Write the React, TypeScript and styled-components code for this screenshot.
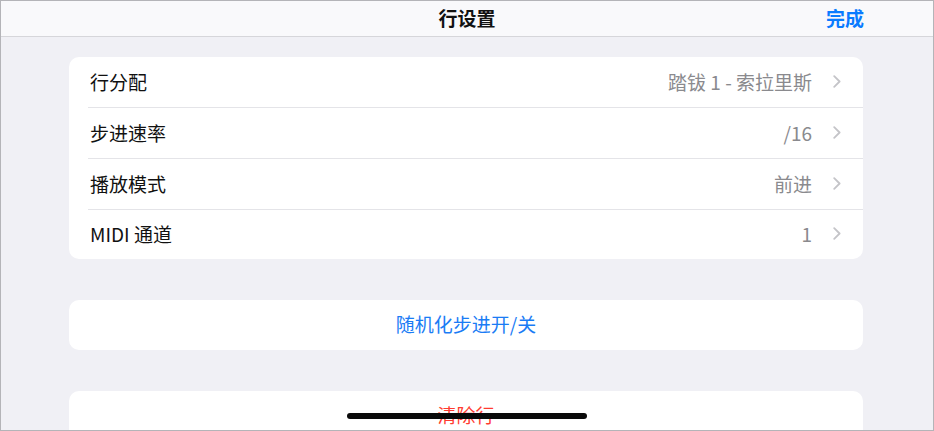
import React from "react";
import styled, { createGlobalStyle } from "styled-components";

const Global = createGlobalStyle`
  html, body { margin: 0; padding: 0; }
  body {
    font-family: "Noto Sans CJK SC", "Noto Sans", "Liberation Sans", sans-serif;
    -webkit-font-smoothing: antialiased;
  }
`;

const Frame = styled.div`
  position: relative;
  width: 934px;
  height: 431px;
  box-sizing: border-box;
  border: 1px solid #b4b4b8;
  background: #f0f0f5;
  overflow: hidden;
  display: flex;
  flex-direction: column;
`;

const NavBar = styled.header`
  flex: none;
  height: 35px;
  box-sizing: border-box;
  background: #f9f9fb;
  border-bottom: 1px solid #d6d6da;
  display: grid;
  grid-template-columns: 1fr auto 1fr;
  align-items: center;
  padding: 0 69px 3px;
  height: 36px;
`;

const Title = styled.h1`
  grid-column: 2;
  margin: 0;
  font-size: 19px;
  font-weight: 700;
  color: #111;
  line-height: 1;
`;

const Done = styled.button`
  grid-column: 3;
  justify-self: end;
  border: 0;
  background: none;
  padding: 0;
  font: inherit;
  font-size: 19px;
  font-weight: 700;
  color: #0a7bff;
  line-height: 1;
`;

const Content = styled.main`
  display: flex;
  flex-direction: column;
  gap: 41px;
  padding: 20px 70px 0 68px;
`;

const Card = styled.section`
  background: #fff;
  border-radius: 10px;
  overflow: hidden;
`;

const Row = styled.div`
  height: 50px;
  box-sizing: border-box;
  margin-left: 19px;
  padding: 0 22px 2px 2px;
  display: flex;
  align-items: center;
  border-bottom: 1px solid #e4e4e8;
  &:not(:last-child) {
    height: 51px;
  }
  &:last-child {
    border-bottom: 0;
    height: 49px;
  }
`;

const Label = styled.span`
  flex: 1;
  font-size: 19px;
  color: #111;
`;

const Value = styled.span`
  font-size: 19px;
  color: #8a8a8e;
  margin-right: 21px;
`;

const ActionRow = styled.button<{ $tone: "blue" | "red" }>`
  display: flex;
  width: 100%;
  height: 50px;
  box-sizing: border-box;
  padding: 0 0 3px;
  align-items: center;
  justify-content: center;
  border: 0;
  background: none;
  font: inherit;
  font-size: 19px;
  color: ${(p) => (p.$tone === "red" ? "#ff3b30" : "#1a7cf5")};
`;

const HomeIndicator = styled.div`
  position: absolute;
  left: 346px;
  bottom: 11px;
  width: 240px;
  height: 6px;
  border-radius: 3px;
  background: #0a0a0a;
`;

const Chevron = () => (
  <svg width="8" height="13" viewBox="0 0 8 13" fill="none">
    <path d="M1.2 1.2 L6.6 6.5 L1.2 11.8" stroke="#c4c4c8" strokeWidth="1.8" strokeLinecap="round" strokeLinejoin="round" />
  </svg>
);

const settings = [
  { label: "行分配", value: "踏钹 1 - 索拉里斯" },
  { label: "步进速率", value: "/16" },
  { label: "播放模式", value: "前进" },
  { label: "MIDI 通道", value: "1" },
];

export default function App() {
  return (
    <>
      <Global />
      <Frame>
        <NavBar>
          <Title>行设置</Title>
          <Done>完成</Done>
        </NavBar>
        <Content>
          <Card>
            {settings.map((s) => (
              <Row key={s.label}>
                <Label>{s.label}</Label>
                <Value>{s.value}</Value>
                <Chevron />
              </Row>
            ))}
          </Card>
          <Card>
            <ActionRow $tone="blue">随机化步进开/关</ActionRow>
          </Card>
          <Card>
            <ActionRow $tone="red">清除行</ActionRow>
          </Card>
        </Content>
        <HomeIndicator />
      </Frame>
    </>
  );
}
